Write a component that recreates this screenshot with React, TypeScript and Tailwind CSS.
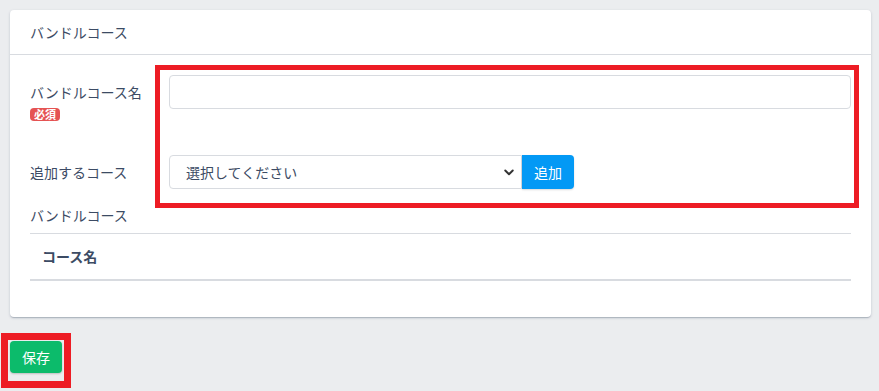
import React from "react";

export default function App() {
  const font = { fontFamily: '"Noto Sans CJK JP", "Noto Sans", sans-serif' };
  return (
    <div className="relative w-[879px] h-[391px] bg-[#ebedef] pt-[10px] overflow-hidden" style={font}>
      <div className="ml-[10px] w-[861px] bg-white rounded-[4px] shadow-[0_1px_1px_0_rgba(60,75,100,.14),0_2px_1px_-1px_rgba(60,75,100,.12),0_1px_3px_0_rgba(60,75,100,.2)]">
        <div className="h-[45px] flex items-center px-[20px] text-[14px] text-[#3c4b64] border-b border-[#d8dbe0]">
          バンドルコース
        </div>
        <div className="px-[20px] pt-[20px] pb-[36px] text-[14px] text-[#3c4b64]">
          <div className="flex items-start h-[80px]">
            <div className="w-[139px] pt-[7px] leading-[21px]">
              <div>バンドルコース名</div>
              <span className="inline-block mt-[4px] rounded-[4px] bg-[#e55353] text-white text-[11px] font-bold leading-[13px] px-[4px]">必須</span>
            </div>
            <div className="flex-1 h-[34px] border border-[#d8dbe0] rounded-[4px] bg-white" />
          </div>
          <div className="flex items-center h-[34px]">
            <div className="w-[139px] leading-[21px]">追加するコース</div>
            <div className="w-[353px] h-[34px] border border-[#d8dbe0] rounded-l-[4px] flex items-center justify-between pl-[16px] pr-[6px] text-[#3c4b64]">
              <span>選択してください</span>
              <svg width="12" height="12" viewBox="0 0 16 16" fill="none" stroke="#333" strokeWidth="2.6" strokeLinecap="round" strokeLinejoin="round">
                <path d="M3 6l5 5 5-5" />
              </svg>
            </div>
            <button className="h-[34px] w-[52px] bg-[#0399f5] text-white rounded-r-[4px] text-[14px] shadow-[0_1px_2px_rgba(0,0,0,.15)]">追加</button>
          </div>
          <div className="mt-[16px] leading-[21px]">バンドルコース</div>
          <div className="mt-[7px] border-t border-[#d8dbe0] border-b-2 h-[48px] flex items-center px-[12px] font-bold text-[#3c4b64]">
            コース名
          </div>
        </div>
      </div>
      <button className="mt-[24px] ml-[10px] w-[52px] h-[32px] rounded-[4px] bg-[#0cbb6b] text-white text-[14px] shadow-[0_1px_2px_rgba(0,0,0,.2)]">保存</button>

      <div className="absolute left-[155px] top-[65px] w-[704px] h-[143px] border-[5px] border-[#ed1c24] pointer-events-none" />
      <div className="absolute left-[1px] top-[333px] w-[70px] h-[55px] border-[7px] border-[#ed1c24] pointer-events-none" />
    </div>
  );
}
